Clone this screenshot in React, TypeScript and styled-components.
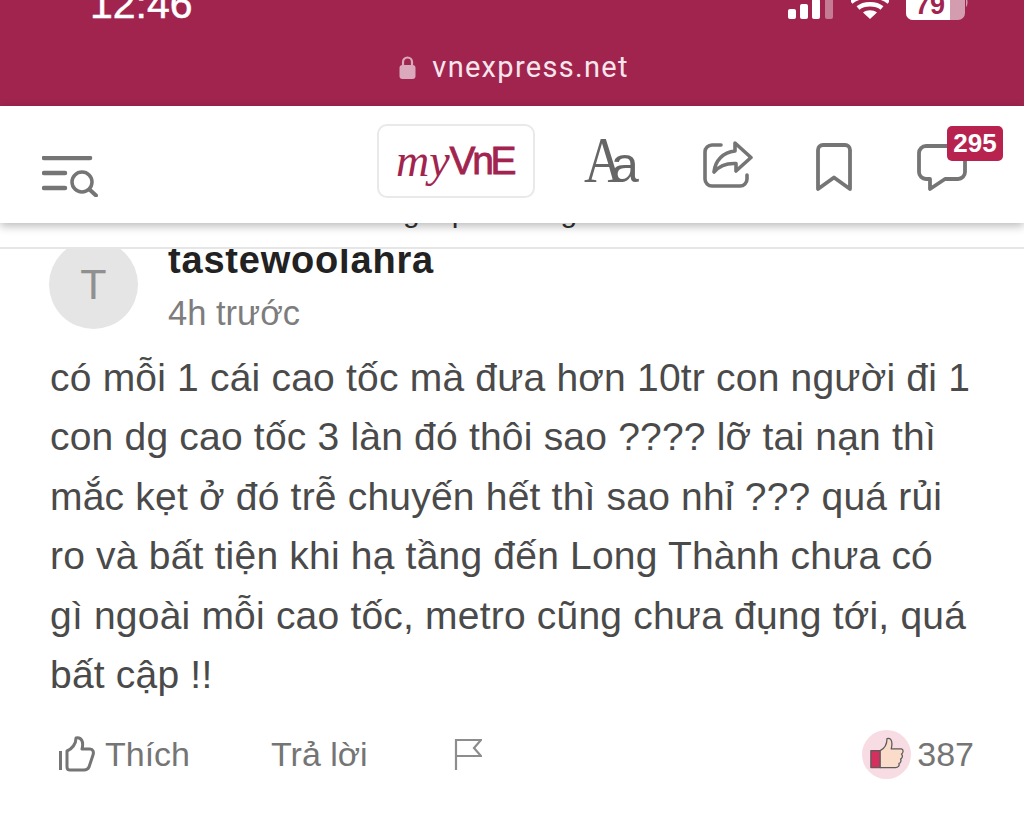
import React from 'react';
import styled, { createGlobalStyle } from 'styled-components';

const GlobalStyle = createGlobalStyle`
  html, body {
    margin: 0;
    padding: 0;
    background: #fff;
  }
  body {
    font-family: "Liberation Sans", Arial, sans-serif;
  }
`;

const Page = styled.div`
  width: 1024px;
  height: 813px;
  overflow: hidden;
  background: #fff;
  display: flex;
  flex-direction: column;
`;

const BrowserBar = styled.div`
  height: 106px;
  flex: none;
  background: #a1244f;
  display: flex;
  flex-direction: column;
`;

const StatusRow = styled.div`
  height: 22px;
  flex: none;
  overflow: hidden;
  display: flex;
  align-items: flex-end;
  padding: 0 56px 0 90px;
`;

const Clock = styled.div`
  color: #fff;
  font-size: 41px;
  line-height: 36px;
  height: 36px;
  margin-right: auto;
  -webkit-text-stroke: 0.5px #fff;
`;

const StatusIcons = styled.div`
  display: flex;
  align-items: flex-end;
  gap: 17px;
  height: 22px;
  padding-bottom: 2px;
  box-sizing: border-box;
`;

const UrlRow = styled.div`
  flex: 1;
  display: flex;
  align-items: center;
  justify-content: center;
  gap: 16px;
  padding: 6px 0 0 4px;
`;

const UrlText = styled.span`
  color: #f6e6ec;
  font-family: Roboto, "Liberation Sans", sans-serif;
  font-size: 29px;
  letter-spacing: 1.3px;
`;

const Toolbar = styled.header`
  position: relative;
  z-index: 2;
  height: 117px;
  flex: none;
  box-sizing: border-box;
  background: #fff;
  box-shadow: 0 3px 9px rgba(0, 0, 0, 0.28);
  display: flex;
  align-items: center;
  padding: 0 57px 0 42px;
`;

const MenuButton = styled.div`
  display: flex;
  margin-top: 23px;
  margin-right: auto;
`;

const LogoButton = styled.div`
  width: 158px;
  height: 74px;
  box-sizing: border-box;
  border: 2px solid #e9e9e9;
  border-radius: 10px;
  display: flex;
  align-items: center;
  justify-content: center;
  margin-top: -8px;
`;

const LogoMy = styled.span`
  font-family: "Liberation Serif", serif;
  font-style: italic;
  font-size: 46px;
  color: #a1244f;
`;

const LogoVne = styled.span`
  font-family: "Liberation Sans", sans-serif;
  font-size: 39px;
  color: #a1244f;
  letter-spacing: -3.4px;
  -webkit-text-stroke: 0.8px #a1244f;
  padding-right: 3px;
`;

const FontSizeButton = styled.div`
  display: flex;
  align-items: baseline;
  width: 57px;
  margin-left: 49px;
  margin-top: -6px;
  color: #666;
`;

const BigA = styled.span`
  font-family: "Liberation Serif", serif;
  font-size: 65px;
  line-height: 60px;
  display: inline-block;
  transform: scaleX(0.84);
  transform-origin: left center;
`;

const SmallA = styled.span`
  font-family: "Liberation Sans", sans-serif;
  font-size: 50px;
  margin-left: -20px;
`;

const ToolIcon = styled.div<{ $gap: number; $drop: number }>`
  display: flex;
  position: relative;
  margin-left: ${p => p.$gap}px;
  margin-top: ${p => p.$drop}px;
`;

const Badge = styled.span`
  position: absolute;
  top: -18px;
  left: 30px;
  width: 56px;
  height: 35px;
  border-radius: 5px;
  background: #b8224f;
  color: #fff;
  font-size: 26px;
  font-weight: 700;
  line-height: 35px;
  text-align: center;
`;

const HiddenStrip = styled.div`
  height: 26px;
  flex: none;
  box-sizing: border-box;
  border-bottom: 2px solid #e6e6e6;
  overflow: hidden;
  display: flex;
  padding-left: 403px;
`;

const StripGlyph = styled.span<{ $gap: number }>`
  margin: -30px 0 0 ${p => p.$gap}px;
  font-size: 30px;
  line-height: 38px;
  color: #333;
`;

const Comment = styled.section`
  flex: 1;
  overflow: hidden;
  padding: 0 50px;
`;

const CommentHead = styled.div`
  display: flex;
  gap: 30px;
  margin: -9px 0 0 -1px;
`;

const Avatar = styled.div`
  width: 89px;
  height: 89px;
  flex: none;
  border-radius: 50%;
  background: #e5e5e5;
  color: #909090;
  font-size: 43px;
  line-height: 89px;
  text-align: center;
`;

const Author = styled.div`
  display: flex;
  flex-direction: column;
`;

const AuthorName = styled.div`
  font-size: 38px;
  font-weight: 700;
  line-height: 40px;
  color: #222;
  letter-spacing: 0.8px;
`;

const Time = styled.div`
  font-size: 34.5px;
  line-height: 38px;
  color: #7d7d7d;
  margin-top: 14px;
`;

const Body = styled.p`
  margin: 16px 0 0;
  width: 925px;
  font-size: 39px;
  line-height: 59.4px;
  color: #4a4a4a;
  letter-spacing: 0.2px;
`;

const Actions = styled.div`
  display: flex;
  align-items: center;
  height: 50px;
  margin-top: 25px;
  color: #757575;
  font-size: 34px;
`;

const LikeButton = styled.div`
  display: flex;
  align-items: center;
  gap: 10px;
  margin-left: 9px;
`;

const Reply = styled.span`
  margin-left: 81px;
`;

const FlagButton = styled.div`
  display: flex;
  margin-left: 86px;
`;

const Reactions = styled.div`
  display: flex;
  align-items: center;
  gap: 6px;
  margin-left: auto;
`;

const ReactionBubble = styled.div`
  width: 49px;
  height: 49px;
  border-radius: 50%;
  background: #f8dce3;
  display: flex;
  align-items: center;
  justify-content: center;
`;

const SignalIcon = () => (
  <svg width="46" height="22" viewBox="0 0 46 22">
    <rect x="0" y="11" width="8" height="10" rx="2" fill="#fff" />
    <rect x="12" y="6" width="8" height="15" rx="2" fill="#fff" />
    <rect x="24" y="1" width="8" height="20" rx="2" fill="#fff" />
    <rect x="37" y="-3" width="8" height="24" rx="2" fill="#fff" opacity="0.4" />
  </svg>
);

const WifiIcon = () => (
  <svg width="38" height="22" viewBox="0 0 38 22" fill="none" stroke="#fff" strokeWidth="4.500">
    <path d="M0 4C10 -4 28 -4 38 4" />
    <path d="M7 10C13 5 25 5 31 10" />
    <path d="M19 21L12 14.500C16 11.500 22 11.500 26 14.500z" fill="#fff" stroke="none" />
  </svg>
);

const BatteryIcon = () => (
  <svg width="62" height="22" viewBox="0 0 62 22">
    <rect x="0" y="-10" width="59" height="32" rx="7" fill="#fff" opacity="0.55" />
    <path d="M7 -10H44V22H7a7 7 0 0 1-7-7V-3a7 7 0 0 1 7-7z" fill="#fff" />
    <text x="24" y="16" textAnchor="middle" fontFamily="Liberation Sans" fontWeight="700" fontSize="27" fill="#a1244f">79</text>
    <path d="M60 0c2 1 2 7 0 9z" fill="#fff" opacity="0.55" />
  </svg>
);

const LockIcon = () => (
  <svg width="17" height="23" viewBox="0 0 17 23">
    <path d="M4 10V6a4.500 4.500 0 0 1 9 0v4" fill="none" stroke="#dba9bc" strokeWidth="2.200" />
    <rect x="0.500" y="9" width="16" height="14" rx="3" fill="#dba9bc" />
  </svg>
);

const MenuSearchIcon = () => (
  <svg width="56" height="41" viewBox="0 0 56 41" fill="none" stroke="#757575" strokeLinecap="round">
    <path d="M2 2H48" strokeWidth="4.500" />
    <path d="M2 17H23" strokeWidth="4.500" />
    <path d="M2 32H23" strokeWidth="4.500" />
    <circle cx="40" cy="26" r="10" strokeWidth="3.500" />
    <path d="M47.500 33.500L54 39.500" strokeWidth="4" />
  </svg>
);

const ShareIcon = () => (
  <svg width="50" height="48" viewBox="0 0 50 48" fill="none" stroke="#757575" strokeWidth="3.600" strokeLinecap="round" strokeLinejoin="round">
    <path d="M18 4H9a7 7 0 0 0-7 7V38a7 7 0 0 0 7 7H37a7 7 0 0 0 7-7V34" />
    <path d="M32 2L48 16.500L33 30V22.500C24 22 17 24 11 31C12 20 20 11 32 10z" />
  </svg>
);

const BookmarkIcon = () => (
  <svg width="36" height="48" viewBox="0 0 36 48" fill="none" stroke="#757575" strokeWidth="3.800" strokeLinejoin="round">
    <path d="M2 46V7a5 5 0 0 1 5-5H29a5 5 0 0 1 5 5V46L18 34.500z" />
  </svg>
);

const CommentIcon = () => (
  <svg width="50" height="47" viewBox="0 0 50 47" fill="none" stroke="#757575" strokeWidth="3.800" strokeLinejoin="round">
    <path d="M9 2H41a7 7 0 0 1 7 7V28a7 7 0 0 1-7 7H28L13 45V35H9a7 7 0 0 1-7-7V9a7 7 0 0 1 7-7z" />
  </svg>
);

const ThumbOutline = () => (
  <svg width="36" height="36" viewBox="0 0 36 36" fill="none" stroke="#757575" strokeWidth="3" strokeLinejoin="round">
    <path d="M1.500 15V34" />
    <path d="M8 15C13 13 17 8 17 2C22 1 25 5 23 13H31C34 13 35 16 34 19L30 31C29 33 28 34 25 34H11C9 34 8 33 8 31z" />
  </svg>
);

const FlagIcon = () => (
  <svg width="28" height="32" viewBox="0 0 28 32" fill="none" stroke="#8d8d8d" strokeWidth="2.200">
    <path d="M2 32V2H27L20 10L27 18H2" />
  </svg>
);

const ThumbColor = () => (
  <svg width="34" height="36" viewBox="0 0 40 40" stroke="#5b5b5b" strokeWidth="1.500" strokeLinejoin="round">
    <path d="M1 16H12V36H1z" fill="#d62f5f" />
    <path d="M12 16C16 14 20 9 20 2C25 0 27 6 25 14H37C40 15 39 19 37 20C39 22 38 25 36 26C37 28 36 31 34 31C35 34 33 36 30 36H12z" fill="#fbdccb" />
  </svg>
);

const App: React.FC = () => {
  return (
    <Page>
      <GlobalStyle />
      <BrowserBar>
        <StatusRow>
          <Clock>12:46</Clock>
          <StatusIcons>
            <SignalIcon />
            <WifiIcon />
            <BatteryIcon />
          </StatusIcons>
        </StatusRow>
        <UrlRow>
          <LockIcon />
          <UrlText>vnexpress.net</UrlText>
        </UrlRow>
      </BrowserBar>

      <Toolbar>
        <MenuButton>
          <MenuSearchIcon />
        </MenuButton>
        <LogoButton>
          <LogoMy>my</LogoMy>
          <LogoVne>VnE</LogoVne>
        </LogoButton>
        <FontSizeButton>
          <BigA>A</BigA>
          <SmallA>a</SmallA>
        </FontSizeButton>
        <ToolIcon $gap={62} $drop={1}>
          <ShareIcon />
        </ToolIcon>
        <ToolIcon $gap={63} $drop={5}>
          <BookmarkIcon />
        </ToolIcon>
        <ToolIcon $gap={65} $drop={5}>
          <CommentIcon />
          <Badge>295</Badge>
        </ToolIcon>
      </Toolbar>

      <HiddenStrip>
        <StripGlyph $gap={0}>g</StripGlyph>
        <StripGlyph $gap={32}>p</StripGlyph>
        <StripGlyph $gap={92}>g</StripGlyph>
      </HiddenStrip>

      <Comment>
        <CommentHead>
          <Avatar>T</Avatar>
          <Author>
            <AuthorName>tastewoolahra</AuthorName>
            <Time>4h trước</Time>
          </Author>
        </CommentHead>
        <Body>
          có mỗi 1 cái cao tốc mà đưa hơn 10tr con người đi 1 con dg cao tốc 3 làn đó thôi sao ???? lỡ tai nạn thì mắc kẹt ở đó trễ chuyến hết thì sao nhỉ ??? quá rủi ro và bất tiện khi hạ tầng đến Long Thành chưa có gì ngoài mỗi cao tốc, metro cũng chưa đụng tới, quá bất cập !!
        </Body>
        <Actions>
          <LikeButton>
            <ThumbOutline />
            <span>Thích</span>
          </LikeButton>
          <Reply>Trả lời</Reply>
          <FlagButton>
            <FlagIcon />
          </FlagButton>
          <Reactions>
            <ReactionBubble>
              <ThumbColor />
            </ReactionBubble>
            <span>387</span>
          </Reactions>
        </Actions>
      </Comment>
    </Page>
  );
};

export default App;
